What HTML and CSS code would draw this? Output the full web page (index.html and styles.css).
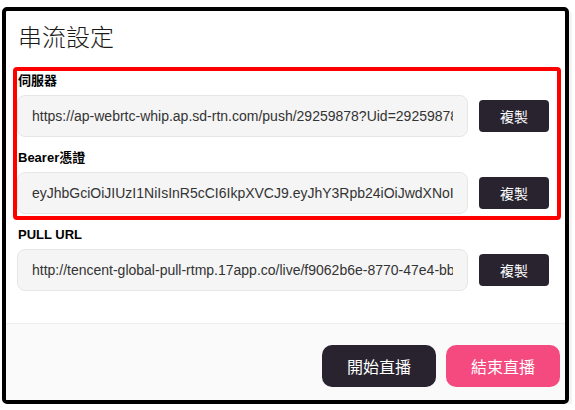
FILE: index.html
```html
<!DOCTYPE html>
<html lang="zh-Hant">
<head>
<meta charset="utf-8">
<title>串流設定</title>
<link rel="stylesheet" href="styles.css">
</head>
<body>
<div class="modal">
  <div class="modal-header">
    <h1 class="modal-title">串流設定</h1>
  </div>
  <div class="modal-body">
    <div class="field-group">
      <div class="field">
        <label class="field-label">伺服器</label>
        <div class="field-row">
          <input class="field-input" type="text" readonly value="https://ap-webrtc-whip.ap.sd-rtn.com/push/29259878?Uid=29259878&amp;token=">
          <button class="copy-btn">複製</button>
        </div>
      </div>
      <div class="field">
        <label class="field-label">Bearer憑證</label>
        <div class="field-row">
          <input class="field-input" type="text" readonly value="eyJhbGciOiJIUzI1NiIsInR5cCI6IkpXVCJ9.eyJhY3Rpb24iOiJwdXNoIiwiYXBwIjoibGl2ZSJ9">
          <button class="copy-btn">複製</button>
        </div>
      </div>
    </div>
    <div class="field">
      <label class="field-label">PULL URL</label>
      <div class="field-row">
        <input class="field-input" type="text" readonly value="http://tencent-global-pull-rtmp.17app.co/live/f9062b6e-8770-47e4-bb12-7c3d">
        <button class="copy-btn">複製</button>
      </div>
    </div>
  </div>
  <div class="modal-footer">
    <button class="action-btn action-start">開始直播</button>
    <button class="action-btn action-stop">結束直播</button>
  </div>
</div>
</body>
</html>
```

FILE: styles.css
```css
* {
  box-sizing: border-box;
}

body {
  margin: 0;
  background: #ffffff;
  font-family: "Liberation Sans", "Noto Sans CJK TC", sans-serif;
  color: #111;
}

.modal {
  margin: 7px 0 0 2px;
  width: 567px;
  border: 4px solid #000;
  border-radius: 5px;
  background: #fff;
  overflow: hidden;
  box-shadow: 3px 3px 0 #f3f3f3;
}

.modal-header {
  padding: 7px 12px 0;
}

.modal-title {
  margin: 0;
  font-family: "Noto Sans CJK TC", sans-serif;
  font-size: 24px;
  font-weight: 300;
  line-height: 36px;
  color: #1a1a1a;
}

.modal-body {
  padding: 18px 16px 20px 11px;
}

.field-group {
  position: relative;
  margin-bottom: 12px;
}

.field-group::after {
  content: "";
  position: absolute;
  top: -5px;
  left: -4px;
  right: -12px;
  bottom: -6px;
  border: 4px solid #ff0000;
  border-radius: 4px;
  pointer-events: none;
}

.field {
  margin-bottom: 12px;
}

.field-group .field:last-child {
  margin-bottom: 0;
}

.field-label {
  display: block;
  font-family: "Liberation Sans", "Noto Sans CJK TC", sans-serif;
  font-size: 13px;
  font-weight: 700;
  line-height: 18px;
  margin: 0 0 5px 1px;
  color: #000;
}

.field-row {
  display: flex;
  align-items: center;
  gap: 11px;
}

.field-input {
  flex: 1;
  min-width: 0;
  height: 42px;
  padding: 0 14px;
  border: 1px solid #e6e6e6;
  border-radius: 8px;
  background: #f5f5f5;
  font-family: "Liberation Sans", sans-serif;
  font-size: 14px;
  color: #333;
  outline: none;
}

.copy-btn {
  flex: none;
  width: 70px;
  height: 32px;
  border: none;
  border-radius: 4px;
  background: #28232f;
  color: #fff;
  font-family: "Noto Sans CJK TC", sans-serif;
  font-size: 14px;
  padding: 0;
}

.modal-footer {
  display: flex;
  justify-content: flex-end;
  gap: 10px;
  padding: 21px 5px 13px;
  border-top: 1px solid #efefef;
  background: #fafafa;
}

.action-btn {
  width: 114px;
  height: 42px;
  border: none;
  border-radius: 10px;
  color: #fff;
  font-family: "Noto Sans CJK TC", sans-serif;
  font-size: 16px;
  padding: 0;
}

.action-start {
  background: #28232f;
}

.action-stop {
  background: #f44a7f;
}
```
